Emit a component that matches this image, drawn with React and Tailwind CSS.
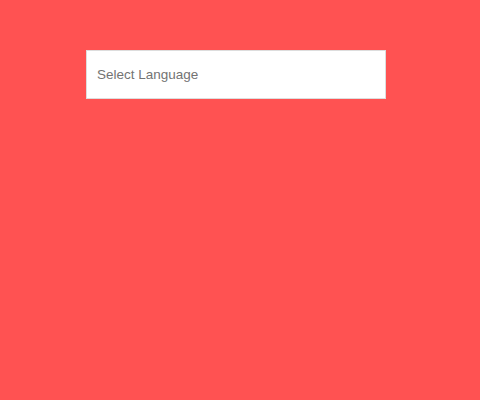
export default function App() {
  return (
    <div className="min-h-screen w-full bg-[#ff5252] pt-[50px] pl-[86px]">
      <div className="w-[300px] h-[49px] bg-white border border-[#dddddd] flex items-center px-[10px] pt-[2px]">
        <span className="text-[13.5px] text-[#737373] font-['Liberation_Sans',Arial,sans-serif]">
          Select Language
        </span>
      </div>
    </div>
  );
}
